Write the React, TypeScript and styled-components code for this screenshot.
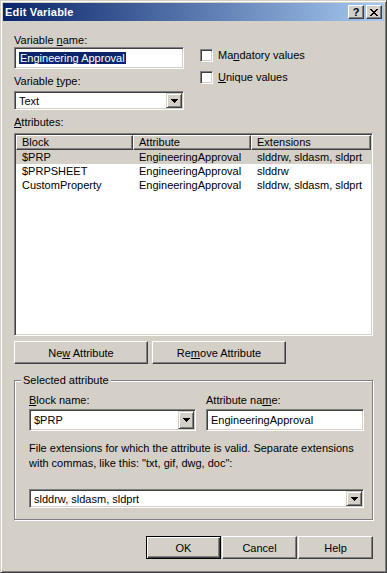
import React from 'react';
import styled, { createGlobalStyle } from 'styled-components';

const FACE = '#d4d0c8';
const SHADOW = '#808080';
const DARK = '#404040';
const LIGHT = '#ffffff';

const GlobalStyle = createGlobalStyle`
  html, body {
    margin: 0;
    padding: 0;
    background: ${FACE};
  }
  body {
    font-family: "Liberation Sans", Arial, sans-serif;
    font-size: 11px;
    color: #000;
  }
`;

const Window = styled.div`
  box-sizing: border-box;
  width: 387px;
  height: 573px;
  display: flex;
  flex-direction: column;
  padding: 2px;
  background: ${FACE};
  border: 1px solid;
  border-color: ${FACE} ${DARK} ${DARK} ${FACE};
  box-shadow: inset 1px 1px ${LIGHT}, inset -1px -1px ${SHADOW};
`;

const TitleBar = styled.div`
  height: 18px;
  display: flex;
  align-items: center;
  gap: 2px;
  padding: 0 2px 0 2px;
  background: linear-gradient(to right, #0a246a, #a6caf0);
`;

const Title = styled.div`
  flex: 1;
  color: #fff;
  font-weight: bold;
  font-size: 11px;
  letter-spacing: 0.2px;
`;

const CaptionButton = styled.div`
  box-sizing: border-box;
  width: 16px;
  height: 14px;
  display: flex;
  align-items: center;
  justify-content: center;
  background: ${FACE};
  border: 1px solid;
  border-color: ${LIGHT} ${DARK} ${DARK} ${LIGHT};
  box-shadow: inset -1px -1px ${SHADOW};
  font-weight: bold;
  font-size: 11px;
  line-height: 12px;
`;

const Body = styled.div`
  flex: 1;
  display: flex;
  flex-direction: column;
  padding: 13px 11px 0 11px;
`;

const TopGrid = styled.div`
  display: grid;
  grid-template-columns: 170px 1fr;
  column-gap: 16px;
`;

const Column = styled.div`
  display: flex;
  flex-direction: column;
`;

const Label = styled.div<{ $top?: number }>`
  line-height: 13px;
  height: 13px;
  margin-top: ${(p) => p.$top ?? 0}px;
  white-space: nowrap;
`;

const Key = styled.span`
  text-decoration: underline;
`;

const Sunken = styled.div<{ $height: number; $top?: number }>`
  box-sizing: border-box;
  height: ${(p) => p.$height}px;
  margin-top: ${(p) => p.$top ?? 0}px;
  display: flex;
  align-items: center;
  background: #fff;
  border: 1px solid;
  border-color: ${SHADOW} ${LIGHT} ${LIGHT} ${SHADOW};
  box-shadow: inset 1px 1px ${DARK}, inset -1px -1px ${FACE};
  padding: 1px;
`;

const FieldText = styled.div`
  flex: 1;
  padding-left: 3px;
  white-space: nowrap;
  overflow: hidden;
`;

const Selected = styled.span`
  background: #0a246a;
  color: #fff;
  padding: 1px 1px 2px 1px;
`;

const DropButton = styled.div`
  box-sizing: border-box;
  width: 16px;
  align-self: stretch;
  display: flex;
  align-items: center;
  justify-content: center;
  background: ${FACE};
  border: 1px solid;
  border-color: ${FACE} ${DARK} ${DARK} ${FACE};
  box-shadow: inset 1px 1px ${LIGHT}, inset -1px -1px ${SHADOW};
`;

const ChecksColumn = styled.div`
  display: flex;
  flex-direction: column;
  gap: 9px;
  padding-top: 15px;
`;

const CheckRow = styled.label`
  display: flex;
  align-items: center;
  gap: 5px;
  line-height: 13px;
`;

const CheckBox = styled.span`
  box-sizing: border-box;
  width: 13px;
  height: 13px;
  background: #fff;
  border: 1px solid;
  border-color: ${SHADOW} ${LIGHT} ${LIGHT} ${SHADOW};
  box-shadow: inset 1px 1px ${DARK}, inset -1px -1px ${FACE};
`;

const ListView = styled.div`
  box-sizing: border-box;
  height: 203px;
  margin-top: 4px;
  background: #fff;
  border: 1px solid;
  border-color: ${SHADOW} ${LIGHT} ${LIGHT} ${SHADOW};
  box-shadow: inset 1px 1px ${DARK}, inset -1px -1px ${FACE};
  padding: 1px;
`;

const ListGrid = styled.div<{ $selected?: boolean }>`
  display: grid;
  grid-template-columns: 117px 118px 1fr;
  background: ${(p) => (p.$selected ? FACE : 'transparent')};
`;

const HeaderCell = styled.div`
  box-sizing: border-box;
  height: 15px;
  line-height: 13px;
  padding-left: 5px;
  background: ${FACE};
  border: 1px solid;
  border-color: ${LIGHT} ${DARK} ${DARK} ${LIGHT};
  box-shadow: inset -1px -1px ${SHADOW};
  white-space: nowrap;
`;

const Cell = styled.div`
  height: 14px;
  line-height: 14px;
  padding-left: 6px;
  white-space: nowrap;
  overflow: hidden;
`;

const ButtonRow = styled.div<{ $end?: boolean; $gap: number; $top: number }>`
  display: flex;
  justify-content: ${(p) => (p.$end ? 'flex-end' : 'flex-start')};
  gap: ${(p) => p.$gap}px;
  margin-top: ${(p) => p.$top}px;
`;

const Button = styled.button<{ $width: number; $default?: boolean }>`
  box-sizing: border-box;
  width: ${(p) => p.$width}px;
  height: 23px;
  padding: 0;
  font-family: inherit;
  font-size: 11px;
  color: #000;
  background: ${FACE};
  border: 1px solid;
  border-color: ${(p) =>
    p.$default ? '#000' : `${LIGHT} ${DARK} ${DARK} ${LIGHT}`};
  box-shadow: ${(p) =>
    p.$default
      ? `inset 1px 1px ${LIGHT}, inset -1px -1px ${DARK}, inset -2px -2px ${SHADOW}`
      : `inset -1px -1px ${SHADOW}`};
`;

const GroupBox = styled.fieldset`
  margin: 10px 0 0 0;
  padding: 7px 8px 11px 14px;
  min-width: 0;
  border: 1px solid ${SHADOW};
  box-shadow: inset 1px 1px ${LIGHT}, 1px 1px ${LIGHT};
`;

const GroupCaption = styled.legend`
  margin-left: -8px;
  padding: 0 2px;
  line-height: 13px;
  background: ${FACE};
`;

const FieldGrid = styled.div`
  display: grid;
  grid-template-columns: 167px 1fr;
  column-gap: 10px;
`;

const Hint = styled.div`
  margin-top: 10px;
  line-height: 15px;
`;

const CloseGlyph = () => (
  <svg width="8" height="7" viewBox="0 0 8 7" shapeRendering="crispEdges">
    <path
      d="M0 0h2v1H0zM6 0h2v1H6zM1 1h2v1H1zM5 1h2v1H5zM2 2h4v1H2zM3 3h2v1H3zM2 4h4v1H2zM1 5h2v1H1zM5 5h2v1H5zM0 6h2v1H0zM6 6h2v1H6z"
      fill="#000"
    />
  </svg>
);

const ArrowGlyph = () => (
  <svg width="7" height="4" viewBox="0 0 7 4" shapeRendering="crispEdges">
    <path d="M0 0h7v1H0zM1 1h5v1H1zM2 2h3v1H2zM3 3h1v1H3z" fill="#000" />
  </svg>
);

interface ComboProps {
  value: string;
  height: number;
  top?: number;
}

const Combo: React.FC<ComboProps> = function ({ value, height, top }) {
  return (
    <Sunken $height={height} $top={top}>
      <FieldText>{value}</FieldText>
      <DropButton>
        <ArrowGlyph />
      </DropButton>
    </Sunken>
  );
};

const rows = [
  { block: '$PRP', attribute: 'EngineeringApproval', ext: 'slddrw, sldasm, sldprt' },
  { block: '$PRPSHEET', attribute: 'EngineeringApproval', ext: 'slddrw' },
  { block: 'CustomProperty', attribute: 'EngineeringApproval', ext: 'slddrw, sldasm, sldprt' },
];

export default function App() {
  return (
    <>
      <GlobalStyle />
      <Window>
        <TitleBar>
          <Title>Edit Variable</Title>
          <CaptionButton>?</CaptionButton>
          <CaptionButton>
            <CloseGlyph />
          </CaptionButton>
        </TitleBar>
        <Body>
          <TopGrid>
            <Column>
              <Label>
                Variable <Key>n</Key>ame:
              </Label>
              <Sunken $height={22}>
                <FieldText>
                  <Selected>Engineering Approval</Selected>
                </FieldText>
              </Sunken>
              <Label $top={6}>
                Variable <Key>t</Key>ype:
              </Label>
              <Combo value="Text" height={19} top={3} />
            </Column>
            <ChecksColumn>
              <CheckRow>
                <CheckBox />
                <span>
                  Ma<Key>n</Key>datory values
                </span>
              </CheckRow>
              <CheckRow>
                <CheckBox />
                <span>
                  <Key>U</Key>nique values
                </span>
              </CheckRow>
            </ChecksColumn>
          </TopGrid>

          <Label $top={6}>
            <Key>A</Key>ttributes:
          </Label>
          <ListView>
            <ListGrid>
              <HeaderCell>Block</HeaderCell>
              <HeaderCell>Attribute</HeaderCell>
              <HeaderCell>Extensions</HeaderCell>
            </ListGrid>
            {rows.map((row, i) => (
              <ListGrid key={row.block} $selected={i === 0}>
                <Cell>{row.block}</Cell>
                <Cell>{row.attribute}</Cell>
                <Cell>{row.ext}</Cell>
              </ListGrid>
            ))}
          </ListView>

          <ButtonRow $gap={4} $top={5}>
            <Button $width={134}>
              Ne<Key>w</Key> Attribute
            </Button>
            <Button $width={134}>
              Re<Key>m</Key>ove Attribute
            </Button>
          </ButtonRow>

          <GroupBox>
            <GroupCaption>Selected attribute</GroupCaption>
            <FieldGrid>
              <Column>
                <Label>
                  <Key>B</Key>lock name:
                </Label>
                <Combo value="$PRP" height={22} top={2} />
              </Column>
              <Column>
                <Label>
                  Attribute na<Key>m</Key>e:
                </Label>
                <Sunken $height={22} $top={2}>
                  <FieldText>EngineeringApproval</FieldText>
                </Sunken>
              </Column>
            </FieldGrid>
            <Hint>
              File extensions for which the attribute is valid. Separate extensions
              <br />
              with commas, like this: "txt, gif, dwg, doc":
            </Hint>
            <Combo value="slddrw, sldasm, sldprt" height={19} top={18} />
          </GroupBox>

          <ButtonRow $end $gap={1} $top={16}>
            <Button $width={75} $default>
              OK
            </Button>
            <Button $width={75}>Cancel</Button>
            <Button $width={75}>Help</Button>
          </ButtonRow>
        </Body>
      </Window>
    </>
  );
}
